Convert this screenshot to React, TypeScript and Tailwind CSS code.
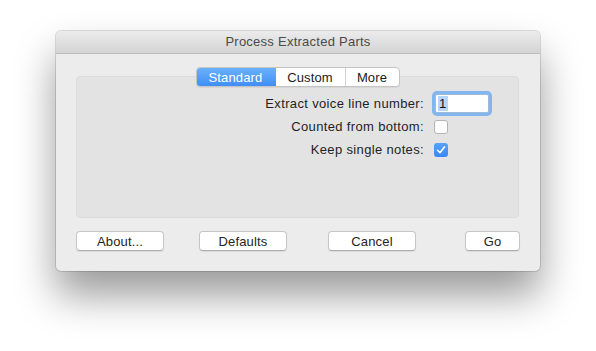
import React from "react";

function Btn({ label, w, className = "" }: { label: string; w: string; className?: string }) {
  return (
    <div
      className={`${w} ${className} h-[20px] flex items-center justify-center bg-white rounded-[4px] border border-[#c6c6c6] border-b-[#adadad] shadow-[0_1px_1px_rgba(0,0,0,0.08)] text-[13px] tracking-[0.15px] text-[#242424] leading-none`}
    >
      {label}
    </div>
  );
}

export default function App() {
  return (
    <div
      className="w-[596px] h-[351px] bg-white pt-[31px] pl-[56px]"
      style={{ fontFamily: '"Liberation Sans", Arial, sans-serif' }}
    >
      <div className="w-[484px] h-[240px] rounded-[5px] bg-[#ececec] overflow-hidden shadow-[0_0_0_1px_rgba(0,0,0,0.13),0_24px_40px_rgba(0,0,0,0.4)] flex flex-col">
        {/* title bar */}
        <div className="h-[23px] shrink-0 bg-gradient-to-b from-[#ececec] to-[#d4d4d4] border-b border-[#bcbcbc] flex items-center justify-center text-[13px] tracking-[0.25px] text-[#4a4a4a]">
          Process Extracted Parts
        </div>
        {/* body */}
        <div className="flex-1 flex flex-col pl-[20px] pt-[13px]">
          {/* tabs */}
          <div className="w-[443px] flex justify-center relative z-10 -mb-[11px]">
            <div className="h-[20px] flex rounded-[4px] border border-[#c4c4c4] bg-white overflow-hidden text-[13px] tracking-[0.15px] leading-none shadow-[0_1px_1px_rgba(0,0,0,0.06)]">
              <div className="w-[80px] -ml-px -my-px h-[20px] flex items-center justify-center text-white bg-gradient-to-b from-[#6db3fa] to-[#3d8cf6] rounded-l-[4px]">
                Standard
              </div>
              <div className="w-[69px] flex items-center justify-center text-[#1c1c1c]">Custom</div>
              <div className="w-[54px] flex items-center justify-center text-[#1c1c1c] border-l border-[#d2d2d2]">
                More
              </div>
            </div>
          </div>
          {/* group box */}
          <div className="w-[443px] h-[142px] bg-[#e3e3e3] border border-[#dcdcdc] rounded-[4px] pt-[15px]">
            <div className="grid grid-cols-[347px_auto] gap-x-[10px] text-[13px] tracking-[0.35px] text-[#1f1f1f]">
              <div className="h-[23px] flex items-center justify-end">Extract voice line number:</div>
              <div className="h-[23px] flex items-center">
                <div className="ml-[1px] w-[54px] h-[19px] bg-white border border-[#9fb9d8] rounded-[2px] shadow-[0_0_0_3px_#82b6ee] flex items-center pl-[2px]">
                  <span className="bg-[#b4d6fb] px-[1px] leading-[15px] text-[#111]">1</span>
                </div>
              </div>
              <div className="h-[23px] flex items-center justify-end">Counted from bottom:</div>
              <div className="h-[23px] flex items-center">
                <div className="w-[14px] h-[14px] bg-white border border-[#b3b3b3] rounded-[3px]" />
              </div>
              <div className="h-[23px] flex items-center justify-end">Keep single notes:</div>
              <div className="h-[23px] flex items-center">
                <div className="w-[14px] h-[14px] rounded-[3px] bg-gradient-to-b from-[#5aa2f8] to-[#3a87f4] flex items-center justify-center">
                  <svg width="10" height="10" viewBox="0 0 10 10" fill="none">
                    <path d="M1.6 5.3 L4 7.7 L8.6 1.8" stroke="white" strokeWidth="1.6" strokeLinecap="round" strokeLinejoin="round" />
                  </svg>
                </div>
              </div>
            </div>
          </div>
          {/* buttons */}
          <div className="flex mt-[13px]">
            <Btn label="About..." w="w-[88px]" />
            <Btn label="Defaults" w="w-[88px]" className="ml-[35px]" />
            <Btn label="Cancel" w="w-[88px]" className="ml-[41px]" />
            <Btn label="Go" w="w-[55px]" className="ml-[49px]" />
          </div>
        </div>
      </div>
    </div>
  );
}
